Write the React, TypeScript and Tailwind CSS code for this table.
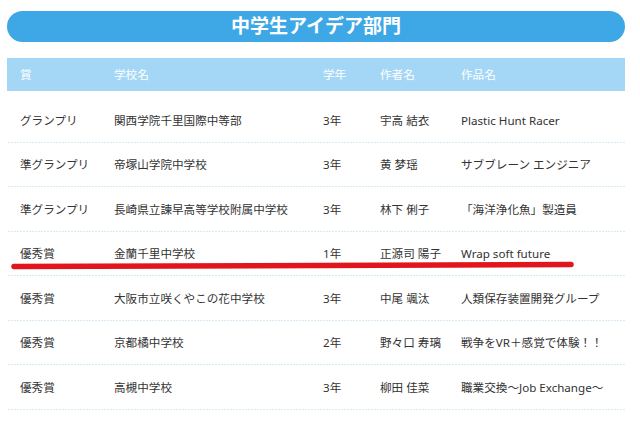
import React from "react";

const rows = [
  ["グランプリ", "関西学院千里国際中等部", "3年", "宇高 結衣", "Plastic Hunt Racer"],
  ["準グランプリ", "帝塚山学院中学校", "3年", "黄 梦瑶", "サブブレーン エンジニア"],
  ["準グランプリ", "長崎県立諫早高等学校附属中学校", "3年", "林下 俐子", "「海洋浄化魚」製造員"],
  ["優秀賞", "金蘭千里中学校", "1年", "正源司 陽子", "Wrap soft future"],
  ["優秀賞", "大阪市立咲くやこの花中学校", "3年", "中尾 颯汰", "人類保存装置開発グループ"],
  ["優秀賞", "京都橘中学校", "2年", "野々口 寿璃", "戦争をVR＋感覚で体験！！"],
  ["優秀賞", "高槻中学校", "3年", "柳田 佳菜", "職業交換～Job Exchange～"],
];

const grid = "grid grid-cols-[107px_209px_57px_81px_1fr]";

export default function App() {
  return (
    <div
      className="relative w-[640px] h-[424px] bg-white overflow-hidden"
      style={{ fontFamily: '"Noto Sans", "Noto Sans CJK JP", sans-serif' }}
    >
      <div className="pt-[11px] pl-[7px] w-[625px]">
        <div className="h-[31px] rounded-full bg-[#3ea8e6] flex items-center justify-center">
          <span className="text-white font-bold text-[19px] leading-none">
            中学生アイデア部門
          </span>
        </div>
        <div className={`${grid} mt-[16px] h-[33px] items-center bg-[#a4d7f6] text-white text-[11.6px]`}>
          <div className="pl-[13px]">賞</div>
          <div>学校名</div>
          <div>学年</div>
          <div>作者名</div>
          <div>作品名</div>
        </div>
        <div className="mt-[7px]">
          {rows.map((r, i) => (
            <div
              key={i}
              className={`${grid} h-[44.5px] items-center text-[11.6px] text-[#333333] bg-[linear-gradient(to_right,#a9d5ea_1px,transparent_1px)] bg-[length:3px_1px] bg-repeat-x bg-bottom`}
            >
              <div className="pl-[13px]">{r[0]}</div>
              <div>{r[1]}</div>
              <div>{r[2]}</div>
              <div>{r[3]}</div>
              <div>{r[4]}</div>
            </div>
          ))}
        </div>
      </div>
      <svg className="absolute left-0 top-0" width="640" height="424">
        <path d="M14 266.5 Q 300 266.5 571 264.5" stroke="#e2141c" strokeWidth="5.5" strokeLinecap="round" fill="none" />
      </svg>
    </div>
  );
}
